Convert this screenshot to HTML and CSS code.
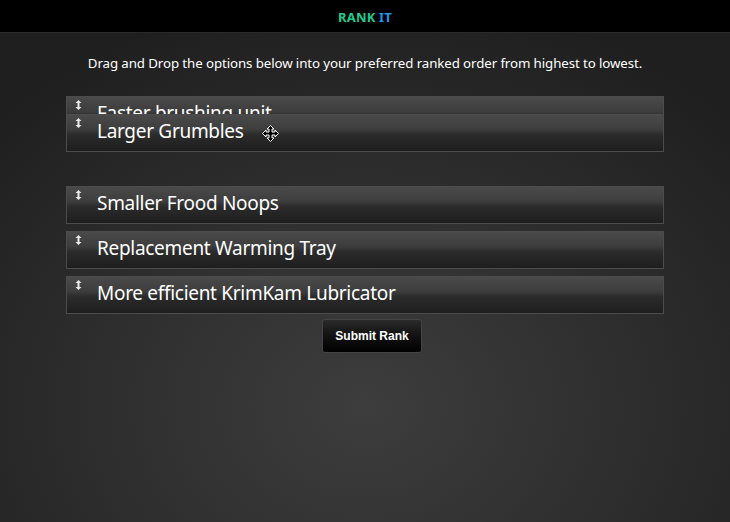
FILE: index.html
```html
<!DOCTYPE html>
<html lang="en">
<head>
  <meta charset="UTF-8">
  <meta name="viewport" content="width=device-width, initial-scale=1.0">
  <title>Rank It</title>
  <link rel="stylesheet" href="styles.css">
</head>
<body>
  <div class="topo">
    <span class="verde">RANK</span> <span class="azul">IT</span>
  </div>
  <div class="conteudo">
    <p class="instrucao">Drag and Drop the options below into your preferred ranked order from highest to lowest.</p>
    <ul class="lista" id="lista">
      <li class="item"><span class="seta"></span>Faster brushing unit</li>
      <li class="vazio"></li>
      <li class="item"><span class="seta"></span>Smaller Frood Noops</li>
      <li class="item"><span class="seta"></span>Replacement Warming Tray</li>
      <li class="item"><span class="seta"></span>More efficient KrimKam Lubricator</li>
      <li class="item arrastando"><span class="seta"></span>Larger Grumbles
        <svg class="cursor" width="17" height="17" viewBox="0 0 17 17">
          <path d="M8.5 0.5 L12 4 L10 4 L10 7 L13 7 L13 5 L16.5 8.5 L13 12 L13 10 L10 10 L10 13 L12 13 L8.5 16.5 L5 13 L7 13 L7 10 L4 10 L4 12 L0.5 8.5 L4 5 L4 7 L7 7 L7 4 L5 4 Z" fill="#000" stroke="#fff" stroke-width="1"/>
        </svg>
      </li>
    </ul>
    <div class="acoes">
      <button class="enviar">Submit Rank</button>
    </div>
  </div>

  <script>
    // icone de setas (igual ao ui-icon-arrowthick-2-n-s)
    const svgSeta = '<svg width="7" height="10" viewBox="0 0 7 10"><path d="M3.5 0 L6.5 3 L4.5 3 L4.5 7 L6.5 7 L3.5 10 L0.5 7 L2.5 7 L2.5 3 L0.5 3 Z" fill="#e8e8e8"/></svg>';
    document.querySelectorAll(".seta").forEach(s => s.innerHTML = svgSeta);
  </script>
</body>
</html>
```

FILE: styles.css
```css
html, body {
  height: 100%;
}
body {
  margin: 0;
  font-family: "Noto Sans", sans-serif;
  color: white;
  background: radial-gradient(ellipse 70% 80% at 50% 78%, #3d3d3d 0%, #2d2d2d 55%, #1f1f1f 100%);
  background-color: #1f1f1f;
  overflow: hidden;
}
.topo {
  height: 32px;
  background: #000;
  border-bottom: 1px solid #2a2a2a;
  text-align: center;
  font-family: "Noto Sans", sans-serif;
  font-weight: bold;
  font-size: 13px;
  line-height: 34px;
  letter-spacing: 0.2px;
}
.verde {
  color: #22c98c;
}
.azul {
  color: #1f95f0;
}
.conteudo {
  width: 598px;
  margin: 0 auto;
}
.instrucao {
  margin: 20px -40px 0;
  text-align: center;
  font-size: 13.3px;
  line-height: 20px;
  letter-spacing: -0.1px;
}
.lista {
  list-style: none;
  margin: 23px 0 0;
  padding: 0;
  position: relative;
  display: flex;
  flex-direction: column;
  gap: 7px;
}
.item {
  height: 36px;
  border: 1px solid #4c4c4c;
  background: linear-gradient(to bottom, #4a4a4a 0%, #3d3d3d 40%, #2b2b2b 55%, #1e1e1e 100%);
  font-size: 19px;
  letter-spacing: -0.3px;
  line-height: 33px;
  padding-left: 30px;
  position: relative;
  box-sizing: content-box;
}
.vazio {
  height: 38px;
}
.seta {
  position: absolute;
  left: 8px;
  top: 3px;
  line-height: 0;
}
.arrastando {
  position: absolute;
  left: 0;
  right: 0;
  top: 18px;
}
.cursor {
  position: absolute;
  left: 195px;
  top: 10px;
}
.acoes {
  text-align: center;
  margin-top: 5px;
  padding-left: 14px;
}
.enviar {
  width: 100px;
  height: 34px;
  background: linear-gradient(to bottom, #2a2a2a 0%, #111 50%, #000 100%);
  border: 1px solid #444;
  border-radius: 3px;
  color: white;
  font-family: "Liberation Sans", Arial, sans-serif;
  font-weight: bold;
  font-size: 12px;
  cursor: pointer;
}
```
